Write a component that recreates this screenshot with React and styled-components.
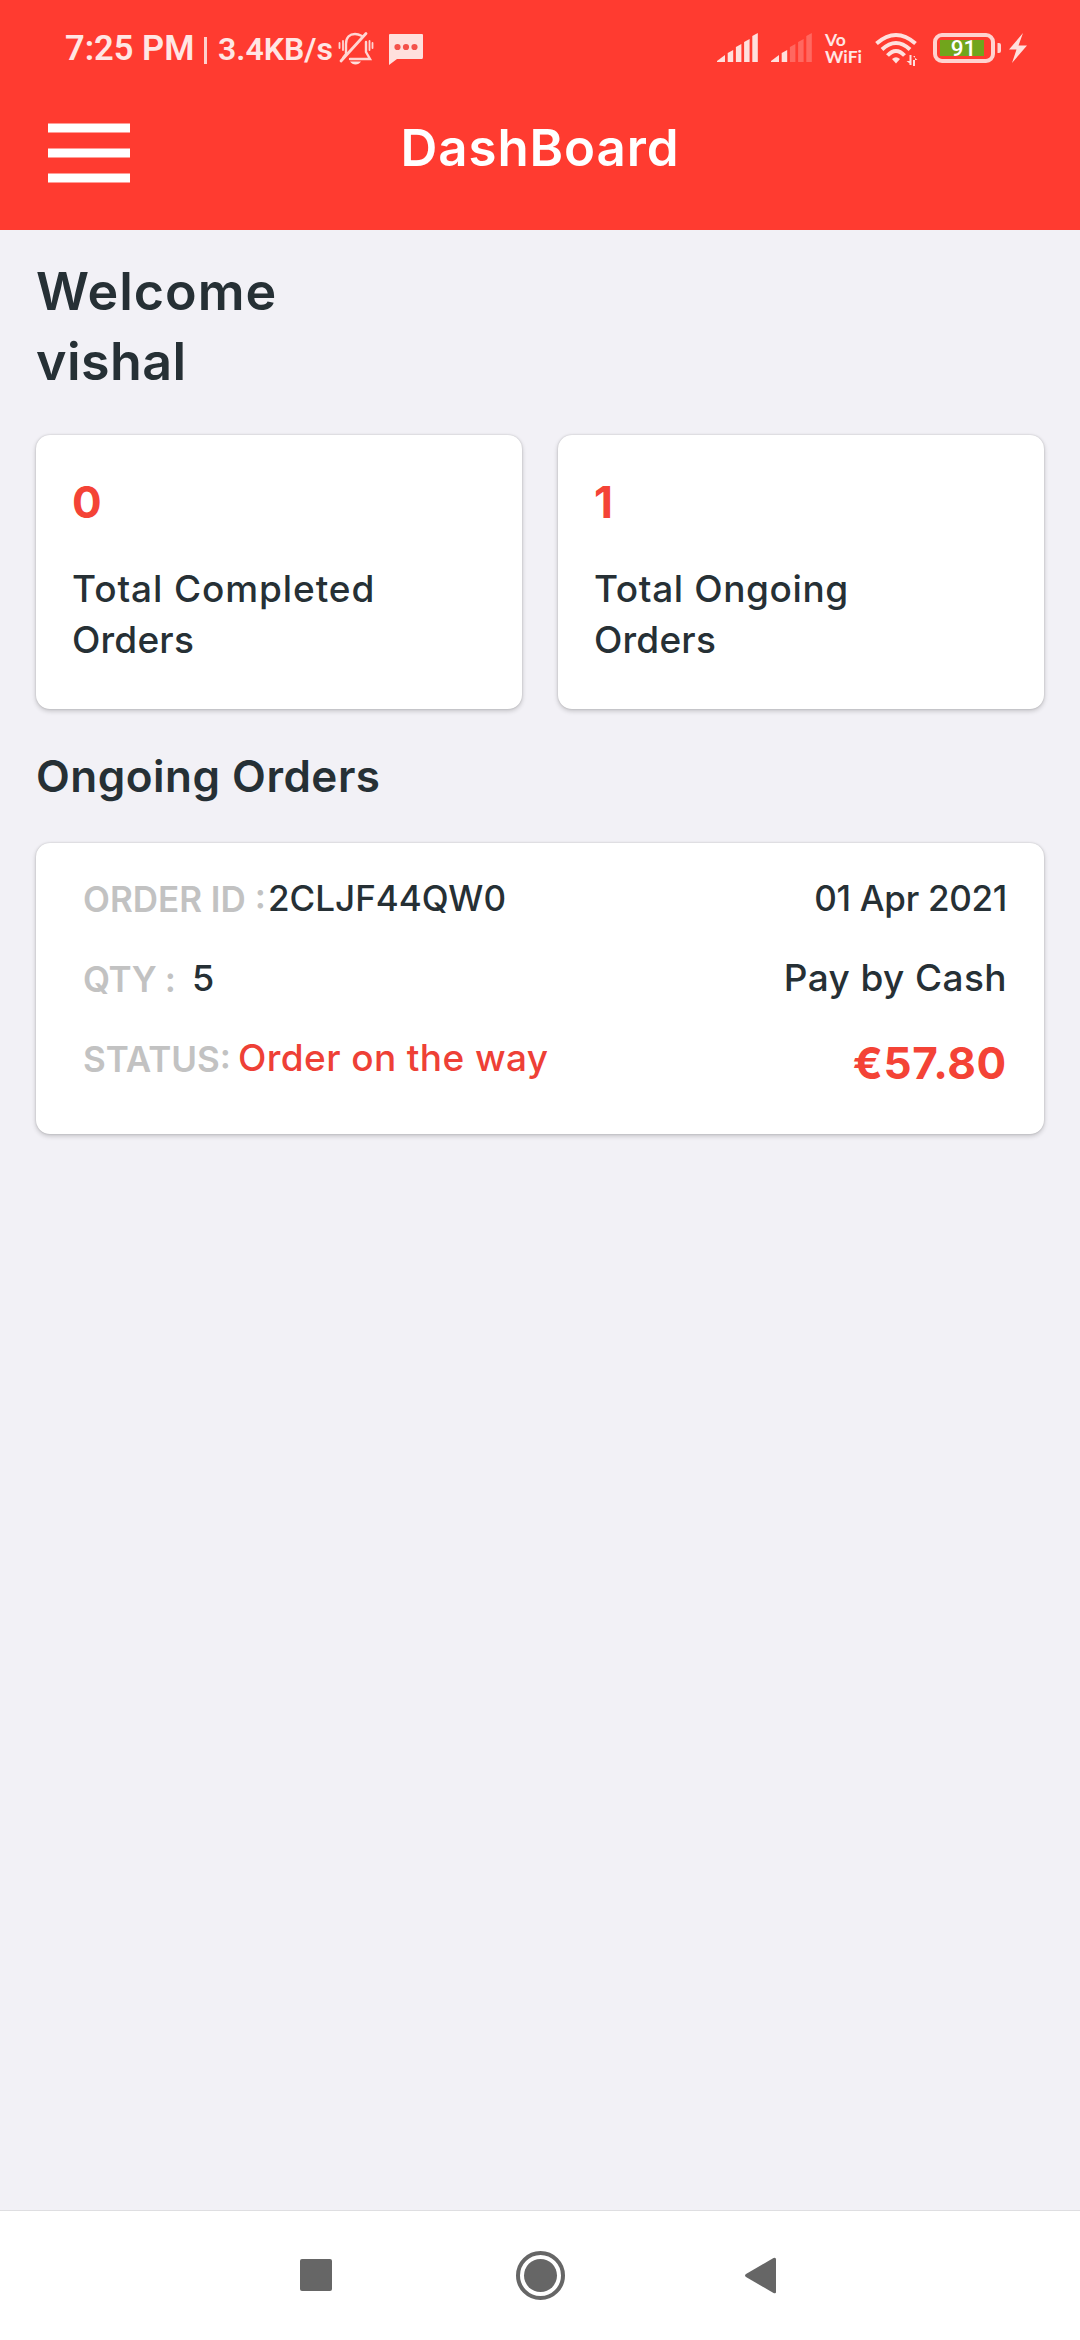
import React from 'react';
import styled, { createGlobalStyle } from 'styled-components';

const GlobalStyle = createGlobalStyle`
  * {
    box-sizing: border-box;
  }

  body {
    margin: 0;
    background: #f2f1f6;
    font-family: 'Inter', 'Liberation Sans', sans-serif;
    color: #263035;
  }
`;

const Screen = styled.div`
  display: flex;
  flex-direction: column;
  width: 1080px;
  height: 2340px;
  overflow: hidden;
  background: #f2f1f6;
  white-space: nowrap;
`;

const Header = styled.header`
  height: 230px;
  background: #ff3b30;
`;

const StatusBar = styled.div`
  display: flex;
  justify-content: space-between;
  height: 96px;
  padding: 28px 52px 0 65px;
  color: #ffe6e4;
  font-family: 'Roboto', sans-serif;
`;

const StatusGroup = styled.div`
  display: flex;
  align-items: center;
  height: 40px;
`;

const Clock = styled.span`
  width: 138px;
  font-size: 34.5px;
  font-weight: 600;
  line-height: 40px;
`;

const Divider = styled.span`
  width: 3px;
  height: 27px;
  margin: 5px 11px 0 1px;
  background: #ffd0cc;
`;

const Speed = styled.span`
  width: 120px;
  font-size: 32px;
  font-weight: 600;
  line-height: 40px;
  padding-top: 2px;
`;

const StatusIcon = styled.svg`
  flex: none;
  width: ${({ $w }) => $w}px;
  height: 40px;
  margin-right: ${({ $gap }) => $gap || 0}px;
  fill: #ffe0dd;
`;

const VoWifi = styled.div`
  width: 50px;
  font-family: 'Lato', sans-serif;
  font-size: 17.5px;
  font-weight: 700;
  line-height: 17px;
`;

const TitleBar = styled.div`
  display: grid;
  grid-template-columns: 82px 1fr 82px;
  padding: 0 48px;
  color: #fff;
`;

const MenuButton = styled.button`
  display: flex;
  flex-direction: column;
  justify-content: space-between;
  width: 82px;
  height: 60px;
  margin-top: 27px;
  padding: 0;
  border: 0;
  background: none;
`;

const MenuLine = styled.span`
  height: 10px;
  background: #fff;
  border-top: 1px solid #ff9d97;
  border-bottom: 1px solid #ff9d97;
`;

const Title = styled.h1`
  margin: 22px 0 0;
  font-size: 51px;
  font-weight: 600;
  line-height: 60px;
  text-align: center;
  letter-spacing: 0.9px;
`;

const Content = styled.main`
  flex: 1;
  padding: 27px 36px 0;
`;

const Greeting = styled.p`
  margin: 0;
  font-size: 52px;
  font-weight: 600;
  line-height: 70px;
  letter-spacing: ${({ $ls }) => $ls || 0}px;
`;

const Card = styled.section`
  background: #fff;
  border-radius: 14px;
  box-shadow: 0 0 2px rgba(0, 0, 0, 0.18), 0 2px 5px rgba(0, 0, 0, 0.2);
`;

const Stats = styled.div`
  display: grid;
  grid-template-columns: 1fr 1fr;
  gap: 36px;
  margin-top: 38px;
`;

const StatCard = styled(Card)`
  height: 274px;
  padding: 37px 36px;
`;

const StatValue = styled.div`
  font-size: 44px;
  font-weight: 700;
  line-height: 60px;
  margin-bottom: 31px;
  color: #f44336;
`;

const StatLabel = styled.div`
  font-size: 37px;
  font-weight: 500;
  line-height: 51px;
  letter-spacing: ${({ $ls }) => $ls || 0}px;
`;

const SectionTitle = styled.h2`
  margin: 37px 0;
  font-size: 44px;
  font-weight: 600;
  line-height: 60px;
  letter-spacing: 0.5px;
`;

const OrderCard = styled(Card)`
  height: 291px;
  padding: 14px 37px 0 47px;
`;

const OrderRow = styled.div`
  display: flex;
  align-items: center;
  height: 80px;
  font-size: 35px;
  font-weight: 500;
  line-height: 50px;
`;

const OrderLabel = styled.span`
  flex: none;
  width: ${({ $w }) => $w}px;
  padding-top: 4px;
  color: #c2c2c2;
  font-weight: 600;
  letter-spacing: ${({ $ls }) => $ls || 0}px;
`;

const OrderValue = styled.span`
  padding-top: 1px;
  font-size: ${({ $size }) => $size || 35}px;
  letter-spacing: ${({ $ls }) => $ls || 0}px;
  color: ${({ $alert }) => ($alert ? '#ee4036' : 'inherit')};
`;

const OrderInfo = styled(OrderValue)`
  margin-left: auto;
`;

const Price = styled.strong`
  margin-left: auto;
  padding-top: 11px;
  font-size: 44px;
  font-weight: 700;
  color: #f44336;
  letter-spacing: 0.7px;
`;

const NavBar = styled.nav`
  display: flex;
  height: 130px;
  padding-left: 300px;
  border-top: 1px solid #dedee1;
  background: #fff;
`;

const NavIcon = styled.svg`
  width: ${({ $w }) => $w}px;
  height: 129px;
  margin-right: ${({ $gap }) => $gap || 0}px;
  fill: #666;
`;

// Height of every signal bar, left to right
const BARS = [6, 12, 18, 23, 29];

const Signal = ({ level, gap }) => (
  <StatusIcon $w={41} $gap={gap} viewBox="0 0 41 40">
    {BARS.map((h, i) => {
      const x = i === 0 ? 0 : i * 8.2 + 2.5;
      const w = i === 0 ? 8 : 5.5;
      return (
        <path
          key={h}
          d={`M${x} ${34 - (i === 0 ? 1 : h - 3)}L${x + w} ${34 - h - (i === 0 ? 1 : 0)}V34H${x}Z`}
          opacity={i < level ? 1 : 0.28}
        />
      );
    })}
  </StatusIcon>
);

const MutedBell = () => (
  <StatusIcon $w={36} $gap={15} viewBox="0 0 36 40">
    <g fill="none" stroke="#ffd6d3" strokeWidth="2.4" strokeLinecap="round">
      <path d="M8 25V16C8 9 12 6 17 6C20 6 22 7 24 8M28 14V24L32 31H12M5 30L8 26" />
      <path d="M3 33L28 5.500" strokeWidth="2.8" />
      <path d="M1.500 15V20M5 13V22M31.500 13V22M34.500 15V20" strokeWidth="1.8" />
    </g>
    <path d="M12 33.500H23Q21 36.500 17.500 36.500T12 33.500Z" />
  </StatusIcon>
);

const Chat = () => (
  <StatusIcon $w={34} viewBox="0 0 34 40">
    <path d="M1 6H33Q34 6 34 7V29Q34 31 33 31H8L0 37V7Q0 6 1 6Z" />
    <g fill="#f4514a">
      <circle cx="8.5" cy="19" r="3.1" />
      <circle cx="17" cy="19" r="3.1" />
      <circle cx="25.5" cy="19" r="3.1" />
    </g>
  </StatusIcon>
);

const Wifi = () => (
  <StatusIcon $w={43} $gap={15} viewBox="0 0 43 40">
    <g fill="none" stroke="#ffe0dd" strokeWidth="4">
      <path d="M1.500 15.500Q21 -1.500 40.500 15.500" />
      <path d="M7 21.500Q21 8.500 35 21.500" />
      <path d="M12.500 27.500Q21 18.500 29.500 27.500" />
    </g>
    <path d="M17 31Q21 27.500 25 31L21 35.500Z" />
    <path d="M34.500 27V37H36.500V27ZM31.500 33L36.500 37V33ZM38 28V38H40V28ZM38 28L42.500 32H38Z" />
  </StatusIcon>
);

const Battery = () => (
  <StatusIcon $w={69} $gap={6} viewBox="0 0 69 40">
    <rect x="2" y="7" width="58" height="26" rx="7" fill="none" stroke="#ffd3d0" strokeWidth="4" />
    <rect x="7" y="12" width="44" height="16" fill="#71a51c" />
    <path d="M64.500 15H66Q68 15 68 17V23Q68 25 66 25H64.500Z" fill="#ffd3d0" />
    <text
      x="30.5"
      y="28"
      textAnchor="middle"
      fontFamily="Roboto, sans-serif"
      fontSize="22.5"
      fontWeight="500"
      fill="#fff"
    >
      91
    </text>
  </StatusIcon>
);

const Bolt = () => (
  <StatusIcon $w={20} viewBox="0 0 20 40">
    <path d="M15 5L1 21.500H8.500L4 35L19 17.500H10.500Z" />
  </StatusIcon>
);

const stats = [
  {
    value: 0,
    lines: [
      { text: 'Total Completed', ls: 0.9 },
      { text: 'Orders', ls: 0.2 },
    ],
  },
  {
    value: 1,
    lines: [
      { text: 'Total Ongoing', ls: 0.6 },
      { text: 'Orders', ls: 0.2 },
    ],
  },
];

const App = () => (
  <Screen>
    <GlobalStyle />
    <Header>
      <StatusBar>
        <StatusGroup>
          <Clock>7:25 PM</Clock>
          <Divider />
          <Speed>3.4KB/s</Speed>
          <MutedBell />
          <Chat />
        </StatusGroup>
        <StatusGroup>
          <Signal level={5} gap={13} />
          <Signal level={2} gap={13} />
          <VoWifi>
            Vo
            <br />
            WiFi
          </VoWifi>
          <Wifi />
          <Battery />
          <Bolt />
        </StatusGroup>
      </StatusBar>
      <TitleBar>
        <MenuButton aria-label="Menu">
          <MenuLine />
          <MenuLine />
          <MenuLine />
        </MenuButton>
        <Title>DashBoard</Title>
      </TitleBar>
    </Header>

    <Content>
      <Greeting $ls={1}>Welcome</Greeting>
      <Greeting $ls={0.4}>vishal</Greeting>

      <Stats>
        {stats.map(({ value, lines }) => (
          <StatCard key={value}>
            <StatValue>{value}</StatValue>
            {lines.map(({ text, ls }) => (
              <StatLabel key={text} $ls={ls}>
                {text}
              </StatLabel>
            ))}
          </StatCard>
        ))}
      </Stats>

      <SectionTitle>Ongoing Orders</SectionTitle>

      <OrderCard>
        <OrderRow>
          <OrderLabel $w={185}>ORDER ID :</OrderLabel>
          <OrderValue>2CLJF44QW0</OrderValue>
          <OrderInfo $ls={-0.3}>01 Apr 2021</OrderInfo>
        </OrderRow>
        <OrderRow>
          <OrderLabel $w={109} $ls={-0.4}>
            QTY :
          </OrderLabel>
          <OrderValue $size={36}>5</OrderValue>
          <OrderInfo $size={37} $ls={0.4}>
            Pay by Cash
          </OrderInfo>
        </OrderRow>
        <OrderRow>
          <OrderLabel $w={155}>STATUS:</OrderLabel>
          <OrderValue $alert $size={37} $ls={0.4}>
            Order on the way
          </OrderValue>
          <Price>€57.80</Price>
        </OrderRow>
      </OrderCard>
    </Content>

    <NavBar>
      <NavIcon $w={32} $gap={183} viewBox="0 0 32 129">
        <rect y="48" width="32" height="32" rx="2" />
      </NavIcon>
      <NavIcon $w={50} $gap={180} viewBox="0 0 50 129">
        <circle cx="25.5" cy="64.5" r="22.5" fill="none" stroke="#666" strokeWidth="4" />
        <circle cx="25.5" cy="64.5" r="16.5" />
      </NavIcon>
      <NavIcon $w={32} viewBox="0 0 32 129">
        <path d="M1 63L28.500 47Q31 46 31 48.500V81Q31 83 28.500 82L1 66Q-1 64.500 1 63Z" />
      </NavIcon>
    </NavBar>
  </Screen>
);

export default App;
